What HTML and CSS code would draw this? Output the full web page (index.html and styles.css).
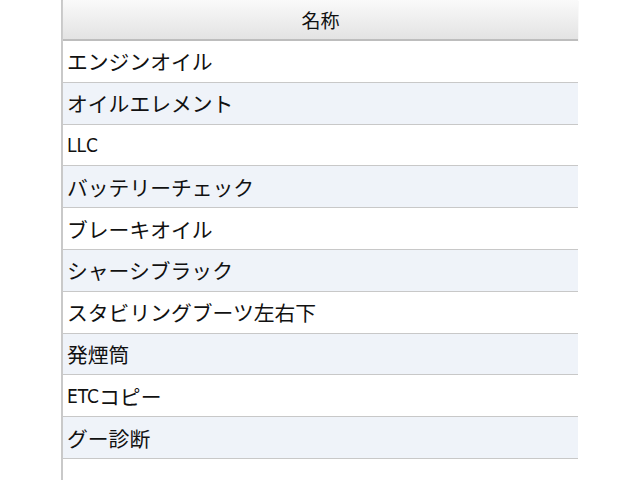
FILE: index.html
```html
<!DOCTYPE html>
<html lang="ja">
<head>
<meta charset="utf-8">
<link rel="stylesheet" href="styles.css">
</head>
<body>
<div class="table">
  <div class="head">名称</div>
  <div class="row">エンジンオイル</div>
  <div class="row alt">オイルエレメント</div>
  <div class="row"><span class="latin">LLC</span></div>
  <div class="row alt">バッテリーチェック</div>
  <div class="row">ブレーキオイル</div>
  <div class="row alt">シャーシブラック</div>
  <div class="row">スタビリングブーツ左右下</div>
  <div class="row alt">発煙筒</div>
  <div class="row"><span class="latin">ETC</span>コピー</div>
  <div class="row alt">グー診断</div>
  <div class="row empty"></div>
</div>
</body>
</html>
```
FILE: styles.css
```css
html, body {
  margin: 0;
  padding: 0;
  background: #ffffff;
  height: 480px;
  overflow: hidden;
}
.table {
  margin-left: 61px;
  width: 517px;
  border-left: 2px solid #c9c9c9;
  box-sizing: border-box;
  font-family: "Noto Sans CJK JP", "DejaVu Sans", sans-serif;
  font-size: 20.8px;
  color: #111111;
}
.head {
  height: 39px;
  display: flex;
  align-items: center;
  justify-content: center;
  font-size: 19px;
  background: linear-gradient(#fafafa, #e3e3e3);
  border-bottom: 2px solid #bdbdbd;
  box-shadow: 0 1px 1px #dddddd;
}
.row {
  height: 40.8px;
  border-bottom: 1px solid #c8c8c8;
  display: flex;
  align-items: center;
  padding-left: 4px;
  background: #ffffff;
}
.row.alt {
  background: #eff3f9;
}
.latin {
  font-family: "DejaVu Sans Condensed", "Liberation Sans Narrow", sans-serif;
  font-size: 19px;
}
.row.empty {
  border-bottom: none;
}
```
